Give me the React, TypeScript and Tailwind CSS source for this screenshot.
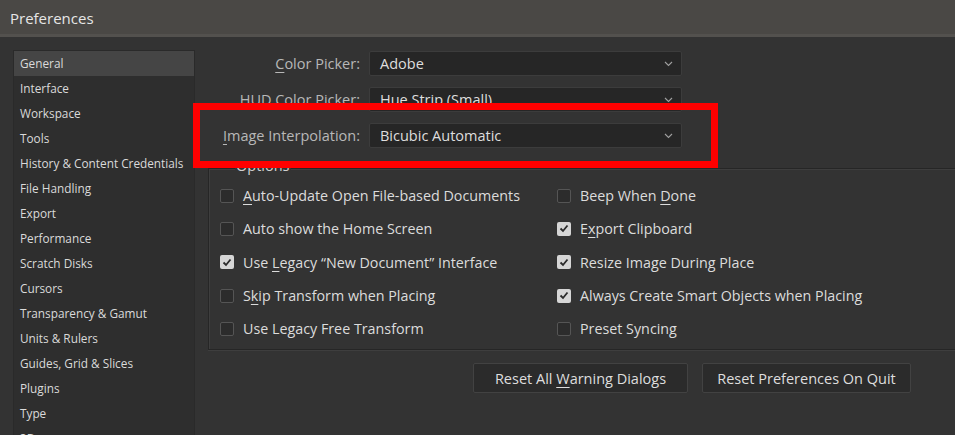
import React from "react";

const font = { fontFamily: '"Open Sans", "Noto Sans", sans-serif' };

const sidebarItems = [
  "General",
  "Interface",
  "Workspace",
  "Tools",
  "History & Content Credentials",
  "File Handling",
  "Export",
  "Performance",
  "Scratch Disks",
  "Cursors",
  "Transparency & Gamut",
  "Units & Rulers",
  "Guides, Grid & Slices",
  "Plugins",
  "Type",
  "3D",
];

function Chevron() {
  return (
    <svg width="9" height="6" viewBox="0 0 9 6" className="shrink-0">
      <polyline points="1,1 4.5,4.5 8,1" fill="none" stroke="#a0a0a0" strokeWidth="1.1" />
    </svg>
  );
}

function U({ children }: { children: React.ReactNode }) {
  return <span className="underline underline-offset-[3px] decoration-1">{children}</span>;
}

function Dropdown({ value }: { value: string }) {
  return (
    <div className="flex h-[25px] w-[313px] items-center justify-between rounded-[2px] border border-[#3c3c3c] bg-[#262626] pl-[10px] pr-[8px] text-[14.5px] text-[#dedede]">
      <span>{value}</span>
      <Chevron />
    </div>
  );
}

function Check({ checked }: { checked: boolean }) {
  return checked ? (
    <div className="flex h-[14px] w-[14px] items-center justify-center rounded-[2px] bg-[#d6d6d6]">
      <svg width="10" height="9" viewBox="0 0 10 9">
        <polyline points="1.5,4.5 4,7 8.5,1.5" fill="none" stroke="#2a2a2a" strokeWidth="1.8" />
      </svg>
    </div>
  ) : (
    <div className="h-[14px] w-[14px] rounded-[2px] border border-[#555555] bg-[#2c2c2c]" />
  );
}

function CheckRow({ checked, children }: { checked: boolean; children: React.ReactNode }) {
  return (
    <div className="flex h-[33.3px] items-center gap-[9px] whitespace-nowrap">
      <Check checked={checked} />
      <span className="text-[14.3px] text-[#dcdcdc]">{children}</span>
    </div>
  );
}

export default function App() {
  return (
    <div className="flex h-[435px] w-[955px] flex-col overflow-hidden bg-[#333333]" style={font}>
      {/* Title bar */}
      <div className="flex h-[37px] shrink-0 items-center border-b-[3px] border-[#53514e] bg-[#4a4845] pl-[10px] pt-[3px] text-[15px] text-[#e6e6e6]">
        Preferences
      </div>

      <div className="flex flex-1 pt-[13px]">
        {/* Sidebar */}
        <div className="ml-[13px] flex w-[182px] shrink-0 flex-col border border-[#2a2a2a] bg-[#2e2e2e] text-[11.8px] text-[#dadada]">
          {sidebarItems.map((it, i) => (
            <div
              key={it}
              className={
                "flex h-[25px] shrink-0 items-center whitespace-nowrap pl-[6px] " +
                (i === 0 ? "bg-[#454545]" : "")
              }
            >
              {it}
            </div>
          ))}
        </div>

        {/* Main */}
        <div className="relative flex flex-1 flex-col">
          <div className="flex flex-col gap-[11px] pt-[1px]">
            <div className="flex items-center">
              <div className="w-[174px] pr-[9px] text-right text-[14.5px] text-[#b8b8b8]">
                <U>C</U>olor Picker:
              </div>
              <Dropdown value="Adobe" />
            </div>
            <div className="flex items-center">
              <div className="w-[174px] pr-[9px] text-right text-[14.5px] text-[#b8b8b8]">
                HUD Color Picker:
              </div>
              <Dropdown value="Hue Strip (Small)" />
            </div>
            <div className="flex items-center">
              <div className="w-[174px] pr-[9px] text-right text-[14.5px] text-[#b8b8b8]">
                <U>I</U>mage Interpolation:
              </div>
              <Dropdown value="Bicubic Automatic" />
            </div>
          </div>

          {/* Options group box */}
          <div className="relative ml-[13px] mt-[20px] flex border-y border-l border-[#262626] pb-[4px] pl-[11px] pt-[10px] shadow-[inset_1px_1px_0_#3e3e3e,0_1px_0_#3e3e3e]">
            <div className="absolute left-[26px] top-[-14px] bg-[#333333] px-[1px] text-[14.5px] text-[#d0d0d0]">
              Options
            </div>
            <div className="flex w-[337px] flex-col">
              <CheckRow checked={false}>
                <U>A</U>uto-Update Open File-based Documents
              </CheckRow>
              <CheckRow checked={false}>Auto show the Home Screen</CheckRow>
              <CheckRow checked={true}>
                Use <U>L</U>egacy “New Document” Interface
              </CheckRow>
              <CheckRow checked={false}>
                S<U>k</U>ip Transform when Placing
              </CheckRow>
              <CheckRow checked={false}>Use Legacy Free Transform</CheckRow>
            </div>
            <div className="flex flex-col">
              <CheckRow checked={false}>
                Beep When <U>D</U>one
              </CheckRow>
              <CheckRow checked={true}>
                E<U>x</U>port Clipboard
              </CheckRow>
              <CheckRow checked={true}>Resize Image During Place</CheckRow>
              <CheckRow checked={true}>Always Create Smart Objects when Placing</CheckRow>
              <CheckRow checked={false}>Preset Syncing</CheckRow>
            </div>
          </div>

          {/* Buttons */}
          <div className="mt-[13px] flex justify-end gap-[14px] pr-[44px]">
            <div className="flex h-[30px] w-[215px] items-center justify-center rounded-[2px] border border-[#424242] bg-[#2b2b2b] text-[14.5px] text-[#dedede]">
              Reset All&nbsp;<U>W</U>arning Dialogs
            </div>
            <div className="flex h-[30px] w-[209px] items-center justify-center rounded-[2px] border border-[#424242] bg-[#2b2b2b] text-[14.5px] text-[#dedede]">
              Reset Preferences On Quit
            </div>
          </div>

          {/* Red annotation box */}
          <div className="pointer-events-none absolute left-[-2px] top-[53px] h-[65px] w-[525px] border-[7px] border-[#ff0000]" />
        </div>
      </div>
    </div>
  );
}
